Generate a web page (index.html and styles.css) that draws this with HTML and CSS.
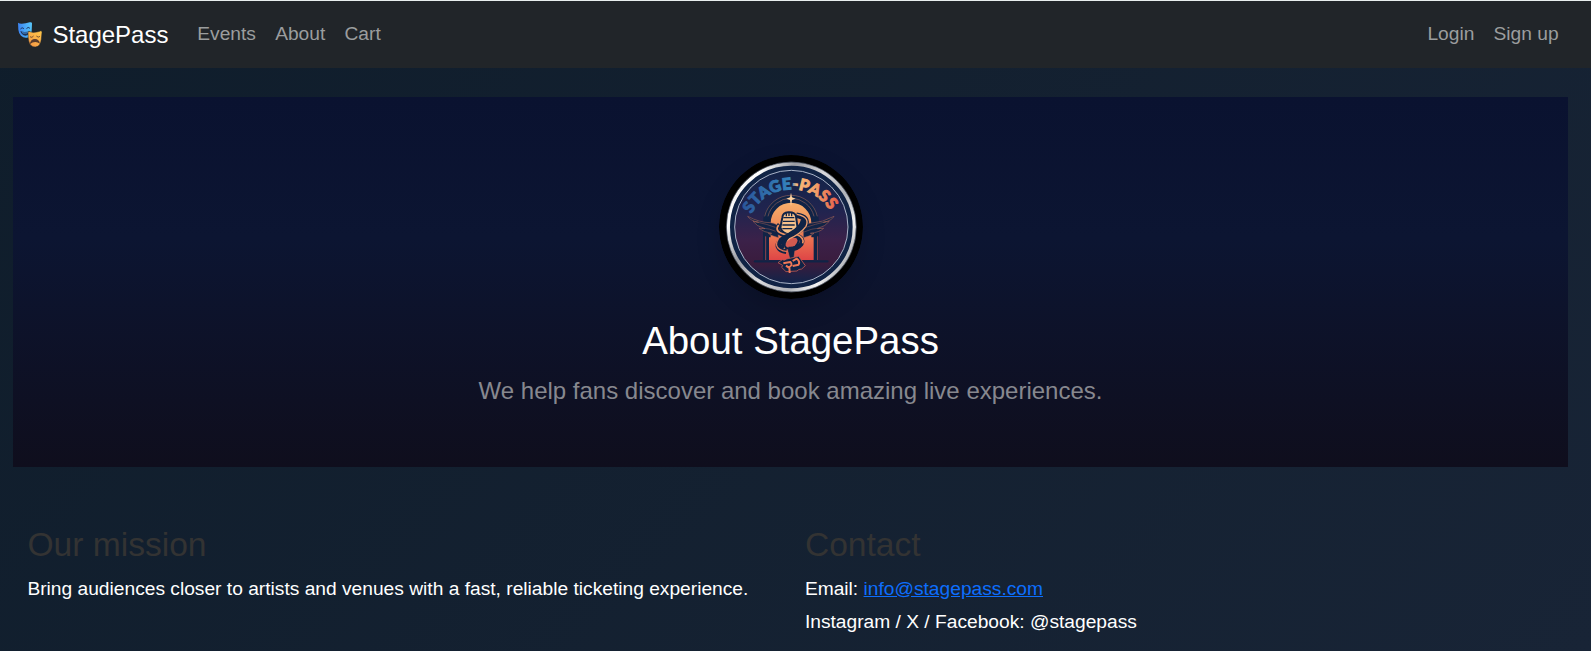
FILE: index.html
```html
<!DOCTYPE html>
<html lang="en">
<head>
<meta charset="utf-8">
<title>About StagePass</title>
<link rel="stylesheet" href="styles.css">
</head>
<body>
<nav class="navbar">
  <a class="brand" href="#">
    <svg class="brand-icon" viewBox="0 0 75 75" aria-hidden="true">
      <defs>
        <linearGradient id="joy" x1="0" x2="1"><stop offset="0" stop-color="#3b82f0"/><stop offset="1" stop-color="#58c8fb"/></linearGradient>
        <linearGradient id="sad" x1="1" y1="0" x2="0.3" y2="1"><stop offset="0" stop-color="#ffc94a"/><stop offset="1" stop-color="#f59a45"/></linearGradient>
      </defs>
      <path fill="url(#joy)" d="M3 2Q7 5 14 5Q26 5 38 1Q45 0 45 4L44 27Q43 44 31 47Q20 49 12 41Q5 34 4 23Z"/>
      <path fill="none" stroke="#203763" stroke-width="3" stroke-linecap="round" d="M11 20Q15 14 20 19M29 19Q33 13 38 18"/>
      <path fill="#213457" d="M10 27Q24 33 39 26Q37 40 25 41Q14 40 10 27Z"/>
      <path fill="#4a9cf0" d="M15 30Q25 34 35 29L33 33Q24 36 17 34Z"/>
      <path fill="url(#sad)" stroke="#212529" stroke-width="1.5" d="M35 28Q46 33 59 30Q67 29 72 26Q75 26 75 31L73 52Q71 74 55 75Q39 75 35 57Q33 48 33 32Z"/>
      <path fill="none" stroke="#68492f" stroke-width="2.7" stroke-linecap="round" d="M40 45Q45 49 49 43M59 43Q64 48 68 44"/>
      <path fill="#593b2c" d="M38 67Q41 51 54 51Q66 51 69 65Q54 54 38 67Z"/>
    </svg>
    <span>StagePass</span>
  </a>
  <div class="nav-links">
    <a href="#">Events</a><a href="#">About</a><a href="#">Cart</a>
  </div>
  <div class="nav-links nav-account">
    <a href="#">Login</a><a href="#">Sign up</a>
  </div>
</nav>
<main class="container">
  <section class="hero">
    <svg class="logo" viewBox="0 0 432 432" role="img" aria-label="Stage-Pass logo">
      <defs>
        <linearGradient id="rim" x1="0" y1="0.2" x2="1" y2="0.8"><stop offset="0" stop-color="#e9eaec"/><stop offset=".12" stop-color="#ffffff"/><stop offset=".3" stop-color="#9a9ca3"/><stop offset=".5" stop-color="#d9d9dc"/><stop offset=".7" stop-color="#b0b3b9"/><stop offset=".85" stop-color="#f4f4f4"/><stop offset="1" stop-color="#8b8d93"/></linearGradient>
        <linearGradient id="disc" x1="0" y1="0" x2="0" y2="1"><stop offset="0" stop-color="#122348"/><stop offset=".35" stop-color="#20244f"/><stop offset=".62" stop-color="#3b2149"/><stop offset=".82" stop-color="#3a1c3d"/><stop offset="1" stop-color="#10244a"/></linearGradient>
        <linearGradient id="sun" x1="0" y1="0" x2="0" y2="1"><stop offset="0" stop-color="#f5ae6b"/><stop offset=".5" stop-color="#ee8355"/><stop offset="1" stop-color="#df4546"/></linearGradient>
        <linearGradient id="word" gradientUnits="userSpaceOnUse" x1="72" y1="0" x2="360" y2="0"><stop offset="0" stop-color="#2b579a"/><stop offset=".5" stop-color="#3484bd"/><stop offset=".56" stop-color="#f8ba79"/><stop offset=".75" stop-color="#f3a069"/><stop offset="1" stop-color="#e55b48"/></linearGradient>
        <path id="arc" d="M97 177A135 135 0 0 1 338 177"/>
      </defs>
      <circle cx="216" cy="216" r="216" fill="#000"/>
      <circle cx="217" cy="216" r="189" fill="#102345" stroke="url(#rim)" stroke-width="10"/>
      <circle cx="217" cy="216" r="195" fill="none" stroke="#60697a" stroke-width="2"/>
      <circle cx="217" cy="216" r="170" fill="url(#disc)" stroke="#a9b3c7" stroke-width="3"/>
      <text class="logo-word" fill="url(#word)" stroke="url(#word)" stroke-width="3"><textPath href="#arc" textLength="285" lengthAdjust="spacing">STAGE-PASS</textPath></text>
      <path d="M132 315V204A84 84 0 0 1 300 204V315" fill="#102346"/>
      <path d="M137 184A81 81 0 0 1 295 184M147 184A71 71 0 0 1 285 184" fill="none" stroke="#8c5f5c" stroke-width="2"/>
      <path d="M150 315V247H155V204A61 61 0 0 1 277 204V247H284V315Z" fill="url(#sun)"/>
      <path d="M140 244V315M296 244V315" stroke="#ce5550" stroke-width="2"/>
      <path d="M108 319H325" stroke="#102346" stroke-width="7" stroke-linecap="round"/>
      <path d="M216 113L219 127L230 131L219 135L216 154L213 135L202 131L213 127Z" fill="#ffd2a0"/>
      <g fill="#102346" stroke="#b46b5c" stroke-width="1.6" stroke-linejoin="round">
        <path d="M86 184Q122 203 154 203Q174 204 178 218L178 248Q155 242 148 235L158 235Q134 232 120 220L138 221Q111 213 102 199L119 202Q94 197 86 184Z"/>
        <path d="M345 184Q309 203 278 204Q261 204 253 219L253 248Q278 242 285 235L274 235Q301 232 314 220L295 221Q321 213 331 199L313 202Q338 197 345 184Z"/>
      </g>
      <path d="M109 200Q143 207 172 218M129 219Q151 220 173 230M322 200Q288 207 258 218M304 219Q278 220 255 231" fill="none" stroke="#9b5f58" stroke-width="1.5"/>
      <!-- microphone head, grille and stand -->
      <path d="M190 188Q191 173 208 172Q228 171 231 184L236 220Q230 236 211 238Q190 236 184 218Z" fill="#f6c08a" stroke="#102346" stroke-width="6"/>
      <path d="M193 188H226M192 199H227M190 210H227M190 221H220M202 175V184M210 174V183M218 174V184" fill="none" stroke="#102346" stroke-width="4"/>
      <path d="M208 248Q235 237 239 257Q234 279 211 282Q193 279 197 263Z" fill="#d25a50" stroke="#102346" stroke-width="6"/>
      <path d="M206 286H228L224 314H213Z" fill="#102346" stroke="#cf6554" stroke-width="2"/>
      <!-- ribbon wound around the microphone -->
      <path d="M182 209Q163 229 196 240L234 242Q256 252 246 268Q233 284 208 282" fill="none" stroke="#102346" stroke-width="14"/>
      <path d="M179 210Q164 229 196 238L235 239Q257 249 251 265" fill="none" stroke="#ed9262" stroke-width="5"/>
      <path d="M232 181Q272 188 257 211Q242 229 213 241Q170 261 180 277Q185 286 202 289" fill="none" stroke="#102346" stroke-width="17"/>
      <path d="M234 178Q274 186 261 214Q245 236 212 251Q190 264 196 282" fill="none" stroke="#f09f6e" stroke-width="4"/>
      <path d="M178 252Q165 272 182 283Q190 289 206 290" fill="none" stroke="#e07555" stroke-width="4"/>
      <path d="M252 194Q247 217 218 234Q197 246 190 279" fill="none" stroke="#102346" stroke-width="12"/>
      <path d="M177 323L190 314Q195 318 203 312L239 304L259 332L248 342Q238 342 234 348L201 350L188 337L191 331Z" fill="#102346" stroke="#c25a52" stroke-width="2.5"/>
      <path d="M193 325L214 321Q224 331 208 337L201 332M211 336L212 354M221 318L233 311Q244 319 239 329L221 333" fill="none" stroke="#ef7857" stroke-width="6" stroke-linejoin="round"/>
    </svg>
    <h1>About StagePass</h1>
    <p class="lead">We help fans discover and book amazing live experiences.</p>
  </section>
  <div class="info">
    <section>
      <h2>Our mission</h2>
      <p>Bring audiences closer to artists and venues with a fast, reliable ticketing experience.</p>
    </section>
    <section>
      <h2>Contact</h2>
      <p>Email: <a href="#">info@stagepass.com</a></p>
      <p>Instagram / X / Facebook: @stagepass</p>
    </section>
  </div>
</main>
</body>
</html>
```

FILE: styles.css
```css
* { box-sizing: border-box; }
html { height: 100%; overflow: hidden; }
body {
  margin: 0;
  min-height: 100%;
  border-top: 1px solid #e9eeee;
  background: linear-gradient(135deg, #0f1d2b 0%, #182436 100%);
  color: #fff;
  font: 19.2px/1.5 "Liberation Sans", Arial, sans-serif;
}
h1, h2, p { margin: 0; font-weight: 400; }
.navbar {
  display: flex;
  align-items: center;
  height: 67px;
  padding: 0 32.4px 0 17px;
  background: #212529;
}
.navbar a { text-decoration: none; }
.brand {
  display: flex;
  align-items: center;
  gap: 10.4px;
  margin-right: 28.8px;
  color: #fff;
  font-size: 24px;
}
.brand-icon { width: 25px; height: 25px; }
.nav-links { display: flex; gap: 19.2px; }
.nav-links a { color: #9b9d9e; }
.nav-account { margin-left: auto; }
.container { padding: 29px 23px 0 13px; }
.hero {
  display: flex;
  flex-direction: column;
  align-items: center;
  height: 370px;
  padding-top: 58px;
  background: linear-gradient(180deg, #0a1230 0%, #0c1532 38%, #0f0e1d 100%);
}
.logo {
  width: 144px;
  height: 144px;
  margin-bottom: 19px;
  border-radius: 50%;
  box-shadow: 0 10px 24px rgba(0, 0, 0, .16);
}
.logo-word { font: 900 48px Lato, "Liberation Sans", sans-serif; }
.hero h1 { margin-bottom: 8.6px; font-size: 38.4px; line-height: 46px; }
.lead { color: #87888f; font-size: 24px; line-height: 36px; }
.info {
  display: grid;
  grid-template-columns: 1fr 1fr;
  padding-top: 58px;
}
.info section { padding: 0 14.4px; }
.info h2 { margin-bottom: 9.6px; color: #333; font-size: 33.6px; line-height: 40.3px; }
.info p { margin-bottom: 4.8px; }
.info p a { color: #0d6efd; }
```
